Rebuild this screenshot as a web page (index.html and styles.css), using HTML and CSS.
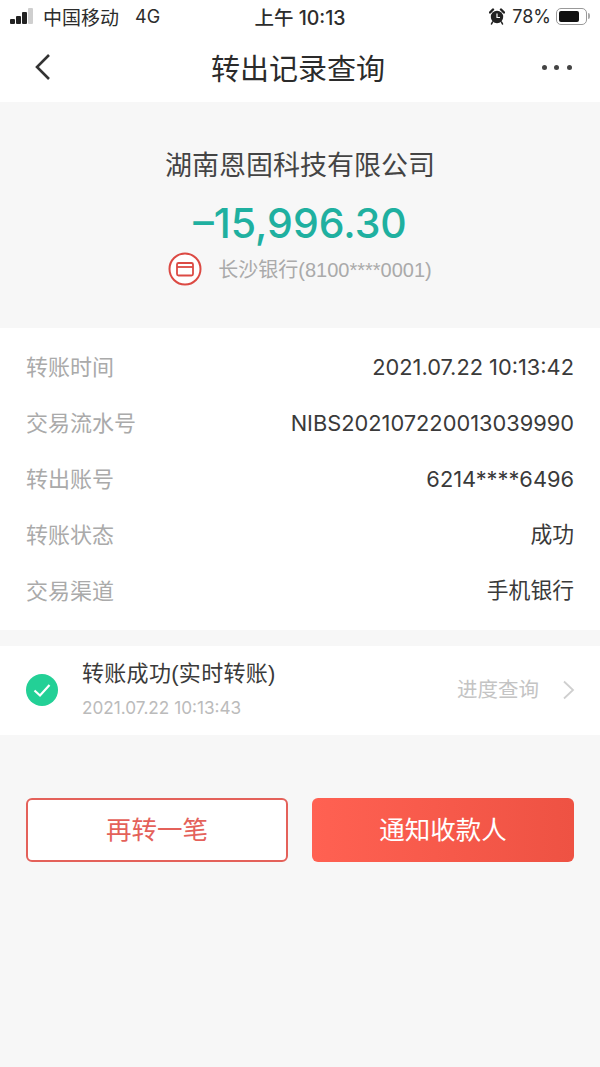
FILE: index.html
```html
<!DOCTYPE html>
<html lang="zh-CN">
<head>
    <meta charset="UTF-8">
    <meta name="viewport" content="width=device-width, initial-scale=1.0">
    <title>转出记录查询</title>
    <link rel="stylesheet" href="styles.css">
</head>
<body>
    <div class="statusbar">
        <div class="status-left">
            <span class="signal"><i class="b1"></i><i class="b2"></i><i class="b3"></i><i class="b4"></i></span>
            <span class="carrier">中国移动</span>
            <span class="net">4G</span>
        </div>
        <div class="status-time">上午 10:13</div>
        <div class="status-right">
            <svg class="alarm" width="16" height="17" viewBox="0 0 16 17">
                <path d="M1 4.500 4 1.500M15 4.500 12 1.500" stroke="#222" stroke-width="2.400" stroke-linecap="round"/>
                <path d="M3.500 14 2.500 16M12.500 14l1 2" stroke="#222" stroke-width="1.600" stroke-linecap="round"/>
                <circle cx="8" cy="9" r="6.200" fill="#222"/>
                <path d="M8 5.500V9.500h3" fill="none" stroke="#fff" stroke-width="1.200"/>
            </svg>
            <span class="percent">78%</span>
            <span class="battery"><i class="level"></i></span>
            <span class="battery-cap"></span>
        </div>
    </div>

    <header class="navbar">
        <svg class="back" width="18" height="28" viewBox="0 0 18 28">
            <path d="M15 2 3 14l12 12" fill="none" stroke="#333" stroke-width="2.600"/>
        </svg>
        <h1>转出记录查询</h1>
        <div class="more"><i></i><i></i><i></i></div>
    </header>

    <section class="summary">
        <div class="payee">湖南恩固科技有限公司</div>
        <div class="amount">–15,996.30</div>
        <div class="bank">
            <svg width="34" height="34" viewBox="0 0 34 34">
                <circle cx="17" cy="17" r="15.500" fill="#fff" stroke="#dc4a44" stroke-width="2"/>
                <rect x="9" y="11" width="16" height="12.500" rx="1.500" fill="none" stroke="#dc4a44" stroke-width="1.800"/>
                <path d="M9 15h16" stroke="#dc4a44" stroke-width="1.800"/>
            </svg>
            <span class="bank-name">长沙银行(8100****0001)</span>
        </div>
    </section>

    <section class="details">
        <div class="row"><span class="label">转账时间</span><span class="value">2021.07.22 10:13:42</span></div>
        <div class="row"><span class="label">交易流水号</span><span class="value">NIBS202107220013039990</span></div>
        <div class="row"><span class="label">转出账号</span><span class="value">6214****6496</span></div>
        <div class="row"><span class="label">转账状态</span><span class="value cn">成功</span></div>
        <div class="row"><span class="label">交易渠道</span><span class="value cn">手机银行</span></div>
    </section>

    <section class="progress">
        <svg class="check" width="32" height="32" viewBox="0 0 32 32">
            <circle cx="16" cy="16" r="16" fill="#23d096"/>
            <path d="M8.500 16.500 14 21.500 23.500 11" fill="none" stroke="#fff" stroke-width="2.200"/>
        </svg>
        <div class="progress-text">
            <div class="progress-title">转账成功(实时转账)</div>
            <div class="progress-date">2021.07.22 10:13:43</div>
        </div>
        <span class="progress-link">进度查询</span>
        <svg class="arrow" width="14" height="20" viewBox="0 0 14 20">
            <path d="M2 1.500 11 10l-9 8.500" fill="none" stroke="#cfcfcf" stroke-width="1.800"/>
        </svg>
    </section>

    <div class="actions">
        <button class="btn btn-outline">再转一笔</button>
        <button class="btn btn-solid">通知收款人</button>
    </div>
</body>
</html>
```

FILE: styles.css
```css
* {
    box-sizing: border-box;
}
html, body {
    height: 100%;
}
body {
    margin: 0;
    overflow: hidden;
    background-color: #f7f7f7;
    color: #333;
    font-family: "Liberation Sans", "Noto Sans CJK SC", sans-serif;
}

/* status bar */
.statusbar {
    height: 32px;
    padding: 0 10px;
    background-color: #fff;
    display: flex;
    align-items: center;
    justify-content: space-between;
    font-size: 19px;
    font-family: Inter, "Noto Sans CJK SC", sans-serif;
    color: #2c2c2c;
}
.status-left, .status-right {
    width: 190px;
    display: flex;
    align-items: center;
}
.status-right {
    justify-content: flex-end;
}
.signal {
    display: flex;
    align-items: flex-end;
    gap: 1px;
    height: 16px;
    margin-right: 10px;
}
.signal i {
    display: block;
    width: 5px;
    border-radius: 1px;
    background-color: #222;
}
.signal .b1 { height: 5px; }
.signal .b2 { height: 8px; }
.signal .b3 { height: 12px; }
.signal .b4 { height: 16px; background-color: #cfcfcf; }
.net {
    margin-left: 16px;
    font-size: 18px;
}
.status-time {
    font-size: 19.500px;
    font-weight: 500;
    white-space: nowrap;
}
.alarm {
    margin-right: 7px;
}
.percent {
    font-size: 18px;
}
.battery {
    width: 31px;
    height: 17px;
    margin-left: 5px;
    padding: 2px;
    border: 1px solid #999;
    border-radius: 5px;
    display: flex;
}
.level {
    width: 78%;
    background-color: #111;
    border-radius: 2px;
}
.battery-cap {
    width: 2px;
    height: 6px;
    margin-left: 1px;
    background-color: #aaa;
    border-radius: 0 2px 2px 0;
}

/* title bar */
.navbar {
    height: 70px;
    padding: 0 28px 0 34px;
    background-color: #fff;
    display: flex;
    align-items: center;
    justify-content: space-between;
}
.navbar h1 {
    margin: 0 0 0 2px;
    font-size: 29px;
    font-weight: 400;
    color: #2b2b2b;
}
.more {
    display: flex;
    gap: 7.500px;
}
.more i {
    width: 5px;
    height: 5px;
    border-radius: 50%;
    background-color: #444;
}

/* payee and amount */
.summary {
    height: 226px;
    padding-top: 46px;
    display: flex;
    flex-direction: column;
    align-items: center;
}
.payee {
    font-size: 27px;
    line-height: 36px;
    color: #444;
}
.amount {
    margin-top: 13px;
    font-family: Inter, "Liberation Sans", sans-serif;
    font-size: 41px;
    line-height: 52px;
    font-weight: 500;
    color: #1fb0a0;
}
.bank {
    margin-top: 3px;
    display: flex;
    align-items: center;
    gap: 16px;
    font-size: 20px;
    color: #aaa;
}
.bank-name {
    padding-bottom: 2px;
}

/* detail rows */
.details {
    height: 302px;
    padding-top: 11px;
    background-color: #fff;
}
.row {
    height: 56px;
    padding: 0 26px;
    display: flex;
    align-items: center;
    justify-content: space-between;
    font-size: 22px;
}
.label {
    padding-bottom: 5px;
    color: #aaa;
}
.value {
    font-family: Inter, "Noto Sans CJK SC", sans-serif;
    font-size: 21.800px;
    color: #3a3a3a;
}
.value.cn {
    padding-bottom: 5px;
}

/* transfer progress */
.progress {
    height: 89px;
    margin-top: 16px;
    padding: 0 26px;
    background-color: #fff;
    display: flex;
    align-items: center;
}
.check {
    margin-top: -2px;
}
.progress-text {
    margin-left: 24px;
    flex: 1;
}
.progress-title {
    font-size: 22px;
    line-height: 30px;
    letter-spacing: 0.300px;
    margin-top: -4px;
    color: #3a3a3a;
}
.progress-date {
    margin-top: 8px;
    font-family: Inter, sans-serif;
    font-size: 17.200px;
    line-height: 22px;
    color: #bbb;
}
.progress-link {
    margin-right: 23px;
    padding-bottom: 6px;
    font-size: 20.500px;
    color: #c4c4c4;
}
.arrow {
    margin-right: -2px;
    margin-top: -2px;
}

/* bottom buttons */
.actions {
    margin-top: 63px;
    padding: 0 26px;
    display: flex;
    justify-content: space-between;
}
.btn {
    width: 262px;
    height: 64px;
    padding: 0 0 5px;
    border-radius: 6px;
    font-family: inherit;
    font-size: 25.500px;
}
.btn-outline {
    background-color: #fff;
    border: 2px solid #e4615a;
    color: #e4615a;
}
.btn-solid {
    border: 0;
    background: linear-gradient(90deg, #ff6152, #ee5243);
    color: #fff;
}
```
